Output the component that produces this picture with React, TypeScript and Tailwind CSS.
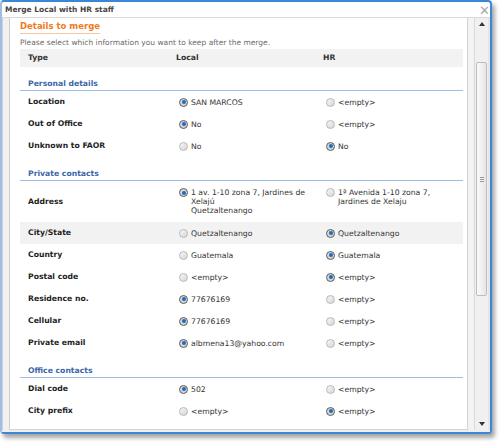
import React from "react";

type Row = {
  label: string;
  local: string[];
  hr: string[];
  pick: "L" | "H";
  tall?: boolean;
  shaded?: boolean;
};

type Section = { title: string; rows: Row[] };

const sections: Section[] = [
  {
    title: "Personal details",
    rows: [
      { label: "Location", local: ["SAN MARCOS"], hr: ["<empty>"], pick: "L" },
      { label: "Out of Office", local: ["No"], hr: ["<empty>"], pick: "L" },
      { label: "Unknown to FAOR", local: ["No"], hr: ["No"], pick: "H" },
    ],
  },
  {
    title: "Private contacts",
    rows: [
      {
        label: "Address",
        local: ["1 av. 1-10 zona 7, Jardines de", "Xelajú", "Quetzaltenango"],
        hr: ["1ª Avenida 1-10 zona 7,", "Jardines de Xelaju"],
        pick: "L",
        tall: true,
      },
      { label: "City/State", local: ["Quetzaltenango"], hr: ["Quetzaltenango"], pick: "H", shaded: true },
      { label: "Country", local: ["Guatemala"], hr: ["Guatemala"], pick: "H" },
      { label: "Postal code", local: ["<empty>"], hr: ["<empty>"], pick: "H" },
      { label: "Residence no.", local: ["77676169"], hr: ["<empty>"], pick: "L" },
      { label: "Cellular", local: ["77676169"], hr: ["<empty>"], pick: "L" },
      { label: "Private email", local: ["albmena13@yahoo.com"], hr: ["<empty>"], pick: "L" },
    ],
  },
  {
    title: "Office contacts",
    rows: [
      { label: "Dial code", local: ["502"], hr: ["<empty>"], pick: "L" },
      { label: "City prefix", local: ["<empty>"], hr: ["<empty>"], pick: "H" },
    ],
  },
];

const Radio: React.FC<{ checked: boolean }> = ({ checked }) =>
  checked ? (
    <span className="flex h-[9px] w-[9px] shrink-0 items-center justify-center rounded-full border border-[#5f5f5f] bg-[#d4d4d4]">
      <span className="h-[4px] w-[4px] rounded-full bg-[#1c6cc0]" />
    </span>
  ) : (
    <span className="h-[9px] w-[9px] shrink-0 rounded-full border border-[#b9b9b9] bg-gradient-to-br from-[#f7f7f7] to-[#d6d6d6]" />
  );

const Choice: React.FC<{ lines: string[]; checked: boolean; tall?: boolean }> = ({ lines, checked, tall }) => (
  <div className={tall ? "flex items-start gap-[3px] self-start pl-[9px] pt-[7px]" : "flex items-center gap-[3px] pl-[9px]"}>
    <Radio checked={checked} />
    <div className="leading-[9px] text-[#333]">
      {lines.map((l) => (
        <div key={l}>{l}</div>
      ))}
    </div>
  </div>
);

export default function App() {
  return (
    <div className="h-[445px] w-[500px] bg-white font-['DejaVu_Sans',sans-serif] text-[7.7px]">
      <div className="relative flex h-[434px] w-[492px] flex-col rounded-[4px] border-2 border-[#3b87d6] border-l-[#9dbfe6] bg-white shadow-[3px_4px_4px_rgba(0,0,0,0.35)]">
        {/* title bar */}
        <div className="flex h-[16px] items-center border-b border-[#d9d9d9] pl-[3px] pt-[1px] text-[7.5px] font-bold text-[#444]">
          Merge Local with HR staff
        </div>
        <span className="absolute right-[0px] top-[2px] text-[13px] font-bold leading-[13px] text-[#a9a9a9]">
          ✕
        </span>

        {/* body */}
        <div className="flex min-h-0 flex-1 bg-[#efefef] pb-[2px]">
          <div className="w-[8px] border-l border-r border-l-[#d2d2d2] border-r-[#cfcfcf] bg-[#f1f1f1]" />
          <div className="flex-1 overflow-hidden border-b border-r border-[#d3d3d3] bg-white pl-[10px] pr-[4px] pt-[3px]">
            <div className="inline-block border-b border-[#f6c9a2] pb-[1px] text-[8.5px] font-bold leading-[11px] text-[#f07a1c]">
              Details to merge
            </div>
            <div className="mt-[4px] text-[7.5px] leading-[10px] text-[#6a6a6a]">
              Please select which information you want to keep after the merge.
            </div>

            <div className="mt-[1px] grid h-[18px] grid-cols-[150px_147px_1fr] items-center bg-[#f2f2f2] font-bold text-[#333]">
              <div className="pl-[8px]">Type</div>
              <div className="pl-[6px]">Local</div>
              <div className="pl-[6px]">HR</div>
            </div>

            {sections.map((section) => (
              <div key={section.title}>
                <div className="flex h-[24px] items-end border-b border-[#9dbde8] pb-[1px] pl-[8px] font-bold leading-[10px] text-[#3b66a8]">
                  {section.title}
                </div>
                {section.rows.map((row) => (
                  <div
                    key={row.label}
                    className={`grid grid-cols-[150px_147px_1fr] items-center ${row.tall ? "h-[41px]" : "h-[22px]"} ${row.shaded ? "bg-[#f2f2f2]" : ""}`}
                  >
                    <div className="pl-[8px] font-bold text-[#1e1e1e]">{row.label}</div>
                    <Choice lines={row.local} checked={row.pick === "L"} tall={row.tall} />
                    <Choice lines={row.hr} checked={row.pick === "H"} tall={row.tall} />
                  </div>
                ))}
              </div>
            ))}
          </div>

          {/* scrollbar */}
          <div className="w-[6px] bg-[#f3f3f3]" />
          <div className="flex w-[14px] flex-col items-center border-l border-[#dadada] bg-[#f0f0f0] pb-[1px]">
            <svg width="6" height="4" viewBox="0 0 6 4" className="mt-[4px]">
              <path d="M0 4 L3 0 L6 4 Z" fill="#333" />
            </svg>
            <div className="mt-[36px] flex h-[234px] w-[11px] items-center justify-center rounded-[2px] border border-[#bdbdbd] bg-gradient-to-r from-[#fbfbfb] to-[#e6e6e6]">
              <div className="flex flex-col gap-[1px]">
                <span className="h-px w-[4px] bg-[#9a9a9a]" />
                <span className="h-px w-[4px] bg-[#9a9a9a]" />
                <span className="h-px w-[4px] bg-[#9a9a9a]" />
              </div>
            </div>
            <div className="flex-1" />
            <svg width="6" height="4" viewBox="0 0 6 4" className="mb-[3px]">
              <path d="M0 0 L3 4 L6 0 Z" fill="#333" />
            </svg>
          </div>
          <div className="w-[2px] bg-[#e6e6e6]" />
        </div>
      </div>
    </div>
  );
}
